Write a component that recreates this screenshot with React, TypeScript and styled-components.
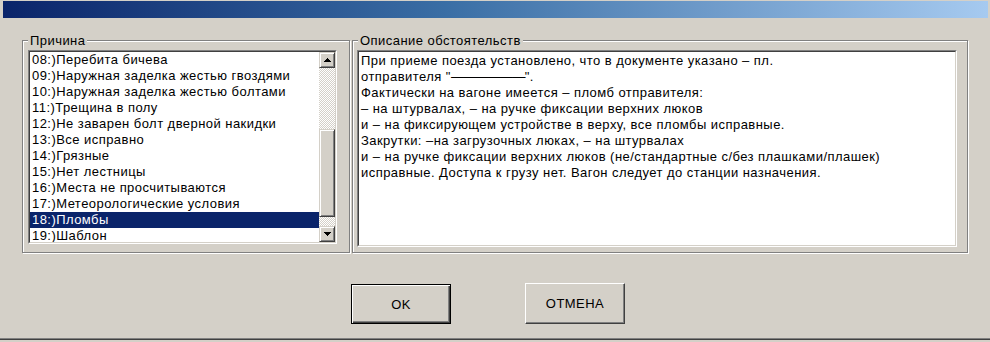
import React from "react";
import styled, { createGlobalStyle } from "styled-components";

const GlobalStyle = createGlobalStyle`
  html, body {
    margin: 0;
    padding: 0;
    background: #d4d0c8;
  }
  body {
    font-family: "Liberation Sans", Arial, sans-serif;
    font-size: 13px;
    letter-spacing: 0.45px;
    color: #000;
  }
`;

const Window = styled.div`
  width: 990px;
  height: 342px;
  background: #d4d0c8;
  overflow: hidden;
  display: flex;
  flex-direction: column;
`;

const TitleBar = styled.div`
  height: 17px;
  margin: 1px 2px 0 3px;
  background: linear-gradient(to right, #0a246a, #3a6ea5 45%, #a6caf0);
`;

const Panels = styled.div`
  display: flex;
  gap: 2px;
  margin-top: 22px;
  padding-left: 22px;
`;

const Group = styled.div<{ $width: number; $padLeft: number }>`
  position: relative;
  box-sizing: border-box;
  width: ${p => p.$width}px;
  height: 213px;
  padding: 9px 0 0 ${p => p.$padLeft}px;
  border: 1px solid #808080;
  box-shadow: inset 1px 1px 0 #fff, 1px 1px 0 #fff;
`;

const Caption = styled.span`
  position: absolute;
  top: -7px;
  left: 5px;
  padding: 0 2px;
  line-height: 14px;
  background: #d4d0c8;
  white-space: nowrap;
`;

// two-pixel sunken frame, as on a classic edit / list control
const Sunken = styled.div<{ $width: number; $height: number }>`
  box-sizing: border-box;
  width: ${p => p.$width}px;
  height: ${p => p.$height}px;
  border: 1px solid;
  border-color: #808080 #fff #fff #808080;
`;

const SunkenInner = styled.div`
  box-sizing: border-box;
  height: 100%;
  display: flex;
  background: #fff;
  border: 1px solid;
  border-color: #404040 #d4d0c8 #d4d0c8 #404040;
  overflow: hidden;
`;

const Items = styled.ul`
  flex: 1;
  margin: 0;
  padding: 0;
  list-style: none;
  overflow: hidden;
`;

const Item = styled.li<{ $selected?: boolean }>`
  height: 16px;
  line-height: 16px;
  padding-left: 2px;
  white-space: nowrap;
  background: ${p => (p.$selected ? "#0a246a" : "transparent")};
  color: ${p => (p.$selected ? "#fff" : "#000")};
`;

const ScrollBar = styled.div`
  width: 16px;
  flex: none;
  display: flex;
  flex-direction: column;
  background-color: #d4d0c8;
  background-image: conic-gradient(#fff 25%, transparent 0 50%, #fff 0 75%, transparent 0);
  background-size: 2px 2px;
`;

const Raised = styled.div`
  box-sizing: border-box;
  width: 16px;
  border: 1px solid;
  border-color: #d4d0c8 #404040 #404040 #d4d0c8;
  box-shadow: inset 1px 1px 0 #fff, inset -1px -1px 0 #808080;
  background: #d4d0c8;
`;

const ScrollButton = styled(Raised)`
  height: 16px;
  flex: none;
  display: flex;
  align-items: center;
  justify-content: center;
  svg {
    display: block;
  }
`;

const Thumb = styled(Raised)<{ $top: number; $height: number }>`
  flex: none;
  margin-top: ${p => p.$top}px;
  height: ${p => p.$height}px;
`;

const Spacer = styled.div`
  flex: 1;
`;

const Memo = styled.div`
  flex: 1;
  padding: 1px 0 0 2px;
`;

const MemoLine = styled.div`
  height: 16px;
  line-height: 16px;
  white-space: pre;
`;

const DashRun = styled.span`
  letter-spacing: -0.7px;
`;

const ButtonRow = styled.div`
  display: flex;
  align-items: flex-end;
  gap: 74px;
  margin-top: 30px;
  padding-left: 351px;
`;

const Button = styled.button<{ $default?: boolean; $height: number }>`
  box-sizing: border-box;
  width: 100px;
  height: ${p => p.$height}px;
  margin: 0;
  padding: 0;
  font-family: "Liberation Sans", Arial, sans-serif;
  font-size: 13px;
  letter-spacing: 0.45px;
  color: #000;
  background: #d4d0c8;
  border: 1px solid;
  border-color: ${p => (p.$default ? "#000" : "#fff #404040 #404040 #fff")};
  box-shadow: ${p =>
    p.$default
      ? "inset 1px 1px 0 #fff, inset -1px -1px 0 #404040, inset -2px -2px 0 #808080"
      : "inset -1px -1px 0 #808080"};
  outline: none;
`;

const BottomEdge = styled.div`
  margin-top: 14px;
  height: 1px;
  background: #808080;
  border-bottom: 1px solid #404040;
`;

const UpArrow = () => (
  <svg width="7" height="4" viewBox="0 0 7 4" shapeRendering="crispEdges">
    <path d="M3 0h1v1h1v1h1v1h1v1H0V3h1V2h1V1h1z" fill="#000" />
  </svg>
);

const DownArrow = () => (
  <svg width="7" height="4" viewBox="0 0 7 4" shapeRendering="crispEdges">
    <path d="M0 0h7v1H6v1H5v1H4v1H3V3H2V2H1V1H0z" fill="#000" />
  </svg>
);

const reasons = [
  "08:)Перебита бичева",
  "09:)Наружная заделка жестью гвоздями",
  "10:)Наружная заделка жестью болтами",
  "11:)Трещина в полу",
  "12:)Не заварен болт дверной накидки",
  "13:)Все исправно",
  "14:)Грязные",
  "15:)Нет лестницы",
  "16:)Места не просчитываются",
  "17:)Метеорологические условия",
  "18:)Пломбы",
  "19:)Шаблон",
];

const description: React.ReactNode[] = [
  "При приеме поезда установлено, что в документе указано – пл.",
  <>
    отправителя "<DashRun>——————</DashRun>".
  </>,
  "Фактически на вагоне имеется – пломб отправителя:",
  "– на штурвалах, – на ручке фиксации верхних люков",
  "и – на фиксирующем устройстве в верху, все пломбы исправные.",
  "Закрутки: –на загрузочных люках, – на штурвалах",
  "и – на ручке фиксации верхних люков (не/стандартные с/без плашками/плашек)",
  "исправные. Доступа к грузу нет. Вагон следует до станции назначения.",
];

export default function App() {
  const selected = "18:)Пломбы";

  return (
    <Window>
      <GlobalStyle />
      <TitleBar />

      <Panels>
        <Group $width={328} $padLeft={5}>
          <Caption>Причина</Caption>
          <Sunken $width={309} $height={194}>
            <SunkenInner>
              <Items>
                {reasons.map(r => (
                  <Item key={r} $selected={r === selected}>
                    {r}
                  </Item>
                ))}
              </Items>
              <ScrollBar>
                <ScrollButton>
                  <UpArrow />
                </ScrollButton>
                <Thumb $top={61} $height={88} />
                <Spacer />
                <ScrollButton>
                  <DownArrow />
                </ScrollButton>
              </ScrollBar>
            </SunkenInner>
          </Sunken>
        </Group>

        <Group $width={616} $padLeft={4}>
          <Caption>Описание обстоятельств</Caption>
          <Sunken $width={600} $height={197}>
            <SunkenInner>
              <Memo>
                {description.map((line, i) => (
                  <MemoLine key={i}>{line}</MemoLine>
                ))}
              </Memo>
            </SunkenInner>
          </Sunken>
        </Group>
      </Panels>

      <ButtonRow>
        <Button $default $height={40}>
          OK
        </Button>
        <Button $height={41}>ОТМЕНА</Button>
      </ButtonRow>

      <BottomEdge />
    </Window>
  );
}
